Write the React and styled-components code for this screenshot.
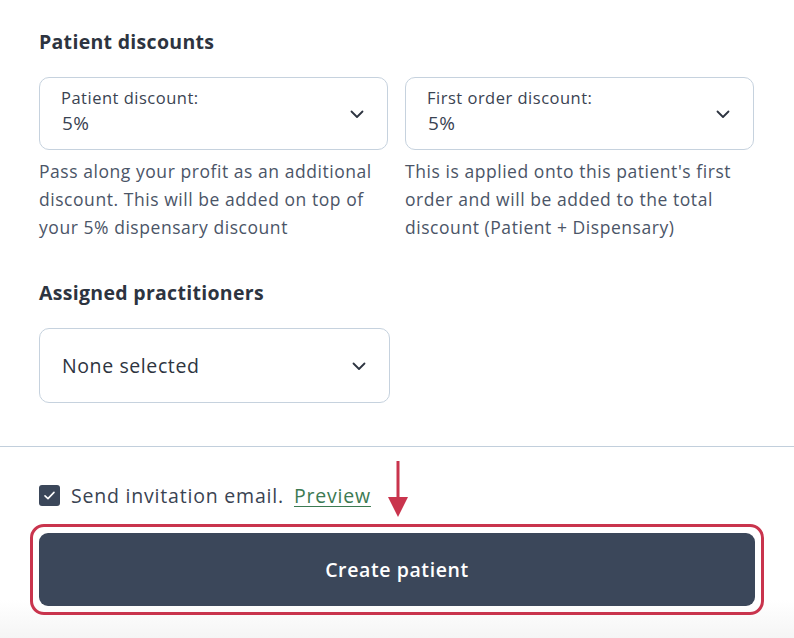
import React from "react"
import styled, { createGlobalStyle } from "styled-components"

const GlobalStyle = createGlobalStyle`
  body {
    margin: 0;
    background: #ffffff;
    font-family: "Open Sans", "Lato", sans-serif;
  }
`

const Page = styled.div`
  width: 794px;
  height: 638px;
  overflow: hidden;
  display: flex;
  flex-direction: column;
  background: linear-gradient(to bottom, #ffffff 0px, #ffffff 600px, #f5f5f5 638px);
`

const Form = styled.div`
  padding: 28px 39px 0 39px;
  display: flex;
  flex-direction: column;
`

const Heading = styled.h2`
  margin: 0;
  font-size: 19.5px;
  font-weight: 700;
  letter-spacing: 0.3px;
  color: #2d3440;
  line-height: 28px;
`

const Columns = styled.div`
  display: grid;
  grid-template-columns: 349px 349px;
  gap: 17px;
  margin-top: 21px;
`

const Field = styled.div`
  display: flex;
  flex-direction: column;
`

const SelectBox = styled.div`
  box-sizing: border-box;
  width: ${props => props.width || "100%"};
  height: ${props => props.height || "73px"};
  border: 1px solid #c6d2de;
  border-radius: 10px;
  display: flex;
  align-items: center;
  justify-content: space-between;
  padding: 0 22px 0 21px;
  background: #fff;
`

const SelectText = styled.div`
  display: flex;
  flex-direction: column;
`

const SelectLabel = styled.span`
  font-size: 16.5px;
  letter-spacing: 0.5px;
  color: #3a4352;
  line-height: 22px;
  margin-top: -3px;
`

const SelectValue = styled.span`
  font-size: 19px;
  letter-spacing: 0.5px;
  color: #3a4352;
  line-height: 28px;
  padding-left: 1px;
`

const Placeholder = styled.span`
  font-size: 19.5px;
  letter-spacing: 0.6px;
  color: #2d3440;
  padding-left: 1px;
`

const Help = styled.p`
  margin: 7px 0 0 0;
  font-size: 17.5px;
  letter-spacing: 0.55px;
  line-height: 28px;
  color: #4b5567;
`

const Section = styled.div`
  margin-top: 38px;
  display: flex;
  flex-direction: column;
`

const Divider = styled.div`
  margin-top: 43px;
  height: 1px;
  background: #c2cfdc;
`

const Footer = styled.div`
  position: relative;
  padding: 35px 30px 0 30px;
  display: flex;
  flex-direction: column;
`

const CheckRow = styled.label`
  display: flex;
  align-items: center;
  padding-left: 9px;
  font-size: 19.5px;
  letter-spacing: 0.8px;
  color: #3a4352;
`

const Checkbox = styled.span`
  width: 21px;
  height: 21px;
  border-radius: 3px;
  background: #3b475a;
  display: inline-flex;
  align-items: center;
  justify-content: center;
  margin-right: 11px;
`

const PreviewLink = styled.a`
  margin-left: 10px;
  color: #3c7a52;
  text-decoration: underline;
  text-underline-offset: 3px;
`

const Highlight = styled.div`
  margin-top: 15px;
  border: 3px solid #c9344d;
  border-radius: 14px;
  padding: 6px;
`

const Button = styled.button`
  width: 100%;
  height: 73px;
  border: none;
  border-radius: 9px;
  background: #3b475a;
  color: #fff;
  font-family: inherit;
  font-size: 19.5px;
  letter-spacing: 0.6px;
  font-weight: 600;
  cursor: pointer;
`

const Arrow = styled.svg`
  position: absolute;
  left: 388px;
  top: 14px;
`

const Chevron = () => (
  <svg width="16" height="16" viewBox="0 0 16 16">
    <path d="M2.5 5.5 L8 11 L13.5 5.5" fill="none" stroke="#2d3440" strokeWidth="1.8" strokeLinecap="round" strokeLinejoin="round" />
  </svg>
)

const App = () => {
  return (
    <Page>
      <GlobalStyle />
      <Form>
        <Heading>Patient discounts</Heading>
        <Columns>
          <Field>
            <SelectBox>
              <SelectText>
                <SelectLabel>Patient discount:</SelectLabel>
                <SelectValue>5%</SelectValue>
              </SelectText>
              <Chevron />
            </SelectBox>
            <Help>
              Pass along your profit as an additional discount. This will be added on top of
              your 5% dispensary discount
            </Help>
          </Field>
          <Field>
            <SelectBox>
              <SelectText>
                <SelectLabel>First order discount:</SelectLabel>
                <SelectValue>5%</SelectValue>
              </SelectText>
              <Chevron />
            </SelectBox>
            <Help>
              This is applied onto this patient's first order and will be added to the total
              discount (Patient + Dispensary)
            </Help>
          </Field>
        </Columns>
        <Section>
          <Heading>Assigned practitioners</Heading>
          <Columns>
            <SelectBox height="75px" width="351px">
              <Placeholder>None selected</Placeholder>
              <Chevron />
            </SelectBox>
          </Columns>
        </Section>
      </Form>
      <Divider />
      <Footer>
        <CheckRow>
          <Checkbox>
            <svg width="13" height="13" viewBox="0 0 13 13">
              <path d="M2 6.8 L5 9.6 L11 3.4" fill="none" stroke="#fff" strokeWidth="1.6" strokeLinecap="round" strokeLinejoin="round" />
            </svg>
          </Checkbox>
          Send invitation email.
          <PreviewLink>Preview</PreviewLink>
        </CheckRow>
        <Highlight>
          <Button>Create patient</Button>
        </Highlight>
        <Arrow width="20" height="56" viewBox="0 0 20 56">
          <line x1="10" y1="0" x2="10" y2="40" stroke="#c9344d" strokeWidth="3" />
          <polygon points="0,36 20,36 10,56" fill="#c9344d" />
        </Arrow>
      </Footer>
    </Page>
  )
}

export default App
